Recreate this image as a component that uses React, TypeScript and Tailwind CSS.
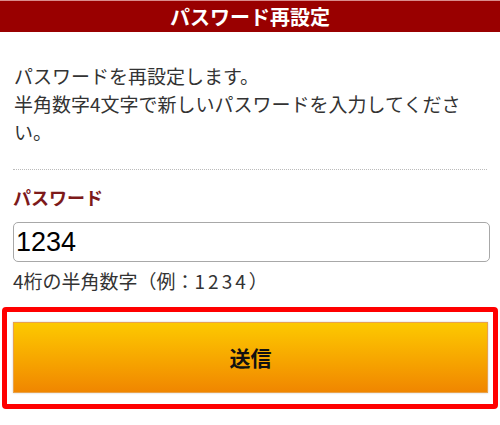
import React, { useState } from 'react';

const jpFont = { fontFamily: '"Noto Sans CJK JP", "Noto Sans", sans-serif' };

const App: React.FC = () => {
  const [password, setPassword] = useState('1234');

  return (
    <div className="w-[500px] h-[425px] bg-white text-[#333]" style={jpFont}>
      {/* Header */}
      <header className="h-[32px] bg-[#990000] border-t border-[#d98c8c] flex items-center justify-center">
        <h1 className="text-white font-bold text-[20px] leading-none">パスワード再設定</h1>
      </header>

      <div className="px-[13px]">
        <p className="mt-[30px] px-[1px] text-[19px] leading-[28px] text-[#333]">
          パスワードを再設定します。
          <br />
          半角数字4文字で新しいパスワードを入力してください。
        </p>

        <div className="mt-[23px] border-t border-dotted border-[#bbb]" />

        <label className="block mt-[14px] text-[18px] leading-[26px] font-bold text-[#7d1a1a]">パスワード</label>

        <input
          type="text"
          value={password}
          onChange={(e) => setPassword(e.target.value)}
          className="mt-[12px] block w-[477px] h-[40px] rounded-[5px] border border-[#a8a8a8] px-[2px] text-[27px] text-black outline-none"
          style={{ fontFamily: '"Liberation Sans", Arial, sans-serif' }}
        />

        <p className="mt-[6px] text-[19px] leading-[26px] text-[#333]">
          4桁の半角数字（例：<span className="tracking-[3px]">1234</span>）
        </p>
      </div>

      {/* Submit */}
      <div className="mt-[13px] mx-[2px] border-[5px] border-[#ff0000] rounded-[4px] pl-[6px] pr-[5px] pt-[10px] pb-[11px]">
        <button
          type="button"
          className="w-full h-[71px] border border-[#e9a24a] bg-gradient-to-b from-[#fcc900] to-[#f08600] shadow-[0_0_2px_rgba(0,0,0,0.2)] text-[21px] font-bold text-[#111] flex items-center justify-center"
        >
          送信
        </button>
      </div>
    </div>
  );
};

export default App;
